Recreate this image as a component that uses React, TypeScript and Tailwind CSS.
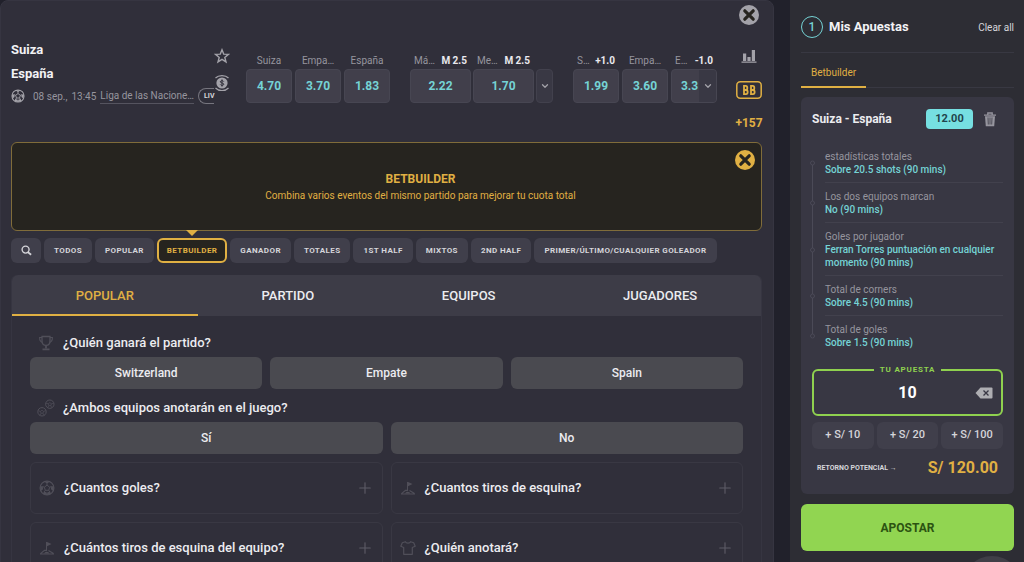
import { useState } from "react";
import type { ReactNode } from "react";
import { ChevronDown, Plus } from "lucide-react";

interface Odd {
  label: string;
  line?: string;
  value: string;
}

interface Selection {
  market: string;
  pick: string;
}

const resultOdds: Odd[] = [
  { label: "Suiza", value: "4.70" },
  { label: "Empa…", value: "3.70" },
  { label: "España", value: "1.83" },
];

const totalOdds: Odd[] = [
  { label: "Má…", line: "M 2.5", value: "2.22" },
  { label: "Me…", line: "M 2.5", value: "1.70" },
];

const handicapOdds: Odd[] = [
  { label: "S…", line: "+1.0", value: "1.99" },
  { label: "Empa…", value: "3.60" },
];

const filters = [
  "Todos",
  "Popular",
  "Betbuilder",
  "Ganador",
  "Totales",
  "1st half",
  "Mixtos",
  "2nd half",
  "Primer/Último/Cualquier goleador",
];

const tabs = ["Popular", "Partido", "Equipos", "Jugadores"];

const selections: Selection[] = [
  { market: "estadísticas totales", pick: "Sobre 20.5 shots (90 mins)" },
  { market: "Los dos equipos marcan", pick: "No (90 mins)" },
  {
    market: "Goles por jugador",
    pick: "Ferran Torres puntuación en cualquier momento (90 mins)",
  },
  { market: "Total de corners", pick: "Sobre 4.5 (90 mins)" },
  { market: "Total de goles", pick: "Sobre 1.5 (90 mins)" },
];

const BallIcon = ({ className }: { className: string }) => (
  <svg viewBox="0 0 16 16" className={className} fill="none" stroke="currentColor">
    <circle cx="8" cy="8" r="6.9" strokeWidth="1.2" />
    <path d="M8 5.2l2.7 2-1 3.1H6.3l-1-3.1z" strokeWidth="1" />
    <path d="M8 5.2V3.4M10.7 7.2l1.9-.7M9.7 10.3l1.2 1.7M6.3 10.3l-1.2 1.7M5.3 7.2l-1.9-.7" />
    <path
      d="M5.2 1.5L8 3.8l2.8-2.3zM15 6l-2.8.4-.3 2.8 2.4 1.7zM12.2 13.9l-1.2-2.4-2.7.9-.3 2.5zM3.8 13.9l1.2-2.4 2.7.9.3 2.5zM1 6l2.8.4.3 2.8-2.4 1.7z"
      fill="currentColor"
      stroke="none"
    />
  </svg>
);

const TwoBallsIcon = ({ className }: { className: string }) => (
  <svg viewBox="0 0 18 18" className={className} fill="none" stroke="currentColor">
    <circle cx="12.8" cy="5.2" r="4.2" />
    <circle cx="5" cy="12.8" r="4.2" />
    <path
      d="M12.8 3.6l1.6 1.2-.6 1.8h-2l-.6-1.8zM9 4.2l2.2.6M14.4 4.8l2.4-.8M13.8 6.6l1 2.2M11.8 6.6l-1 2.2"
      strokeWidth=".7"
    />
    <path
      d="M5 11.2l1.6 1.2-.6 1.8H4l-.6-1.8zM1.2 11.8l2.2.6M6.6 12.4l2.4-.8M6 14.2l1 2.2M4 14.2l-1 2.2"
      strokeWidth=".7"
    />
  </svg>
);

const TrophyIcon = ({ className }: { className: string }) => (
  <svg viewBox="0 0 16 16" className={className} fill="none" stroke="currentColor" strokeWidth="1.3">
    <path d="M4 1.5h8v4.7C12 9 10.5 10.3 8 10.3S4 9 4 6.2z" />
    <path d="M4 2.5H1.6c0 3 .9 4.5 3 4.9M12 2.5h2.4c0 3-.9 4.5-3 4.9" strokeWidth="1.1" />
    <path d="M8 10.3v3M4.500 14.300h7" strokeWidth="1.8" />
  </svg>
);

const CornerIcon = ({ className }: { className: string }) => (
  <svg viewBox="0 0 16 16" className={className} fill="none" stroke="currentColor">
    <path d="M7.5 11V2" />
    <path d="M7.5 1.8l5 2.3-5 2.5z" fill="currentColor" stroke="none" />
    <path d="M1.5 13.6l4-3.2h2M14.5 13.6l-5-3M1 14h14" strokeWidth="1.2" />
    <path d="M5 13.5a3 3 0 0 1 5.5 0z" fill="currentColor" stroke="none" />
  </svg>
);

const ShirtIcon = ({ className }: { className: string }) => (
  <svg
    viewBox="0 0 16 16"
    className={className}
    fill="none"
    stroke="currentColor"
    strokeWidth="1.2"
    strokeLinejoin="round"
  >
    <path d="M5.4 1.7L2.3 2.8.8 6.3l2.9 1.2v6.8h8.600V7.5l2.9-1.2-1.5-3.5-3.1-1.1c-.6 1.8-4.600 1.8-5.2 0z" />
  </svg>
);

const StarIcon = () => (
  <svg viewBox="0 0 16 16" className="h-4 w-4" fill="none" stroke="currentColor" strokeWidth="1.4">
    <path d="M8 1.8l1.7 4.3 4.7.3-3.6 3 1.2 4.5L8 11.4l-4 2.5 1.2-4.500-3.6-3 4.7-.3z" />
  </svg>
);

const CoinIcon = () => (
  <svg viewBox="0 0 16 18" className="h-[18px] w-4" fill="none" stroke="currentColor">
    <circle cx="8" cy="9" r="5.6" fill="currentColor" stroke="none" />
    <path
      d="M9.8 7.600C9.5 6.4 6.3 6.4 6.3 7.8c0 1.5 3.5.9 3.5 2.4 0 1.5-3.2 1.5-3.6.2M8 5.4v7.2"
      stroke="#302f3a"
    />
    <path
      d="M1.5 4C4.5.7 11.5.7 14.5 4M14.5 14C11.5 17.3 4.5 17.3 1.5 14"
      strokeWidth="1.2"
    />
  </svg>
);

const CloseIcon = ({ className }: { className: string }) => (
  <svg viewBox="0 0 20 20" className={className}>
    <circle cx="10" cy="10" r="10" fill="currentColor" />
    <path
      d="M5.8 5.8l8.4 8.4M14.2 5.8l-8.4 8.4"
      stroke="#26241f"
      strokeWidth="3.2"
      strokeLinecap="round"
    />
  </svg>
);

const StatsIcon = () => (
  <svg viewBox="0 0 16 14" className="h-3.5 w-4" fill="currentColor">
    <path d="M2 4.500h3.2V12H2zM6.4 8h3.2v4H6.400zM10.8 1H14v11h-3.2zM.5 12.500h15v1.2H.5z" />
  </svg>
);

const TrashIcon = () => (
  <svg viewBox="0 0 14 15" className="h-[15px] w-3.5" fill="none" stroke="currentColor">
    <path d="M1 3.2h12M4.8 3V1h4.4v2" strokeWidth="1.3" />
    <path d="M2 4.2h10l-.8 10H2.800z" fill="currentColor" stroke="none" />
    <path d="M5 5.5l.3 7M7 5.5v7M9 5.5l-.3 7" stroke="#383743" strokeWidth=".8" />
  </svg>
);

const BackspaceIcon = () => (
  <svg viewBox="0 0 18 12" className="h-3 w-[18px]">
    <path d="M5.5.5h11a1 1 0 0 1 1 1v9a1 1 0 0 1-1 1h-11L.5 6z" fill="#aeaeb2" />
    <path d="M8.5 3.5l5 5M13.5 3.5l-5 5" stroke="#383743" strokeWidth="1.3" />
  </svg>
);

const BetBuilderIcon = () => (
  <svg viewBox="0 0 26 18" className="h-[18px] w-[26px]" fill="none" stroke="currentColor">
    <rect x=".8" y=".8" width="24.4" height="16.400" rx="3.5" strokeWidth="1.5" />
    <path
      d="M8 4.800v8.400h2c2.200 0 2.200-4.200 0-4.200H8h1.800c2 0 2-4.200 0-4.200zM15 4.800v8.400h2c2.200 0 2.200-4.200 0-4.200h-2h1.800c2 0 2-4.200 0-4.200z"
      strokeWidth="1.8"
    />
  </svg>
);

const OddCell = ({ odd, wide }: { odd: Odd; wide?: boolean }) => (
  <div className={wide ? "w-[61px]" : "w-[46px]"}>
    <div
      className={`flex h-[18px] items-center px-1 text-[10px] text-[#96959e] ${
        odd.line ? "justify-between" : "justify-center"
      }`}
    >
      <span>{odd.label}</span>
      {odd.line ? <span className="font-bold text-[#e9e9ee]">{odd.line}</span> : null}
    </div>
    <button
      type="button"
      className="h-[34px] w-full rounded-[4px] border border-[#474652] bg-[#413f4b] text-xs font-bold text-[#75d3d5]"
    >
      {odd.value}
    </button>
  </div>
);

const MatchHeader = () => (
  <header className="flex h-[141px]">
    <div className="min-w-0 flex-1 pt-[37px]">
      <div className="text-[13px] leading-6 font-bold text-[#f2f2f5]">
        <h1>Suiza</h1>
        <h2>España</h2>
      </div>
      <div className="flex h-5 items-center gap-1 text-[10px] whitespace-nowrap text-[#96959e]">
        <BallIcon className="mr-1 h-3.5 w-3.5 shrink-0 text-[#a3a2a9]" />
        <span>08 sep.,</span>
        <span>13:45</span>
        <a href="#liga" className="border-b border-[#55545f]">
          Liga de las Nacione…
        </a>
        <span className="ml-auto shrink-0 rounded-l-full border border-r-0 border-[#76757e] pl-[5px] text-[7px] leading-[14px] font-bold text-[#d5d5da]">
          LIV
        </span>
      </div>
    </div>
    <div className="mr-4 flex w-4 flex-col items-center gap-2.5 pt-[47px] text-[#a3a2a9]">
      <button type="button" aria-label="Favorito">
        <StarIcon />
      </button>
      <button type="button" aria-label="Cash out">
        <CoinIcon />
      </button>
    </div>
    <div className="mr-[19px] flex gap-5 pt-[50px]">
      <div className="flex gap-[3px]">
        {resultOdds.map((odd) => (
          <OddCell key={odd.label} odd={odd} />
        ))}
      </div>
      <div className="flex items-end gap-0.5 self-start">
        {totalOdds.map((odd) => (
          <OddCell key={odd.label} odd={odd} wide />
        ))}
        <button
          type="button"
          aria-label="Más líneas"
          className="flex h-[34px] w-[17px] items-center justify-center rounded-[4px] border border-[#42414d] bg-[#393844] text-[#a3a2a9]"
        >
          <ChevronDown className="h-2.5 w-2.5" strokeWidth={3} />
        </button>
      </div>
      <div className="flex gap-[3px]">
        {handicapOdds.map((odd) => (
          <OddCell key={odd.label} odd={odd} />
        ))}
        <div className="w-[46px]">
          <div className="flex h-[18px] items-center justify-between px-1 text-[10px] text-[#96959e]">
            <span>E…</span>
            <span className="font-bold text-[#e9e9ee]">-1.0</span>
          </div>
          <div className="flex h-[34px] overflow-hidden rounded-[4px] border border-[#474652] bg-[#413f4b]">
            <button type="button" className="flex-1 pl-2 text-xs font-bold text-[#75d3d5]">
              3.3
            </button>
            <button
              type="button"
              aria-label="Más hándicaps"
              className="flex w-[17px] items-center justify-center bg-[#393844] text-[#a3a2a9]"
            >
              <ChevronDown className="h-2.5 w-2.5" strokeWidth={3} />
            </button>
          </div>
        </div>
      </div>
    </div>
    <div className="flex w-[26px] flex-col items-center pt-1 text-[#a3a2a9]">
      <button type="button" aria-label="Cerrar">
        <CloseIcon className="h-5 w-5" />
      </button>
      <button type="button" aria-label="Estadísticas" className="mt-6">
        <StatsIcon />
      </button>
      <button type="button" aria-label="Betbuilder" className="mt-[18px] text-[#e0b043]">
        <BetBuilderIcon />
      </button>
      <a href="#mercados" className="mt-4 text-xs font-bold text-[#e0b043]">
        +157
      </a>
    </div>
  </header>
);

const Question = ({ icon, children }: { icon: ReactNode; children: ReactNode }) => (
  <h3 className="flex items-center gap-2 pl-[7px] text-[13px] leading-5 font-medium text-[#ececf0]">
    <span className="flex w-[18px] justify-center text-[#504f59]">{icon}</span>
    {children}
  </h3>
);

const Options = ({ options }: { options: string[] }) => (
  <div className="flex gap-2">
    {options.map((option) => (
      <button
        key={option}
        type="button"
        className="h-8 flex-1 rounded-md bg-[#4a4a50] text-xs font-medium text-[#ececf0]"
      >
        {option}
      </button>
    ))}
  </div>
);

const MarketCard = ({ icon, title }: { icon: ReactNode; title: string }) => (
  <button
    type="button"
    className="flex h-[52px] items-center justify-between rounded-md border border-[#393843] pr-2 text-left"
  >
    <Question icon={icon}>{title}</Question>
    <Plus className="h-[18px] w-[18px] text-[#5d5c66]" strokeWidth={1.5} />
  </button>
);

const BetSlip = () => {
  const [stake, setStake] = useState("10");
  const add = (amount: number) => setStake(String(Number(stake) + amount));

  return (
    <aside className="flex w-[234px] shrink-0 flex-col bg-[#2d2d34] pr-2.5 pl-[11px]">
      <div className="flex h-[53px] items-center border-b border-[#383842] pt-0.5">
        <span className="flex h-[22px] w-[22px] items-center justify-center rounded-full border border-[#75d3d5] text-xs font-medium text-[#75d3d5]">
          1
        </span>
        <h2 className="ml-1.5 flex-1 text-[13px] font-bold text-[#f2f2f5]">Mis Apuestas</h2>
        <button type="button" className="text-[10px] text-[#d5d5da]">
          Clear all
        </button>
      </div>
      <div className="flex border-b border-[#383842] pt-[9px]">
        <button
          type="button"
          className="-mb-px h-[26px] border-b-2 border-[#e0b043] px-2.5 pb-1 text-[10px] text-[#e0b043]"
        >
          Betbuilder
        </button>
      </div>

      <section className="mt-[9px] rounded-md bg-[#383743] px-[11px] pt-3 pb-3.5">
        <div className="flex h-5 items-center pr-1.5">
          <h3 className="flex-1 text-xs font-bold text-[#ececf0]">Suiza - España</h3>
          <span className="w-[47px] rounded-[4px] bg-[#76dfe1] text-center text-[11px] leading-5 font-bold text-[#22444c]">
            12.00
          </span>
          <button type="button" aria-label="Eliminar" className="ml-2.5 text-[#96959e]">
            <TrashIcon />
          </button>
        </div>
        <ul className="mt-3.5 text-[10px] leading-[13px]">
          {selections.map((item, index) => (
            <li key={item.market} className="relative flex">
              <span
                className={`absolute left-0 w-px bg-[#4b4a57] ${
                  index === 0
                    ? "top-1/2 bottom-0"
                    : index === selections.length - 1
                      ? "top-0 h-1/2"
                      : "inset-y-0"
                }`}
              />
              <span className="absolute top-1/2 -left-0.5 h-[5px] w-[5px] -translate-y-1/2 rounded-full border border-[#4b4a57] bg-[#383743]" />
              <div
                className={`ml-[13px] flex-1 pt-[7px] pb-1.5 ${
                  index < selections.length - 1 ? "border-b border-[#42414d]" : ""
                }`}
              >
                <div className="text-[#96959e]">{item.market}</div>
                <div className="font-medium text-[#75d3d5]">{item.pick}</div>
              </div>
            </li>
          ))}
        </ul>

        <fieldset className="mt-[9px] h-[52px] w-full min-w-0 rounded-md border-2 border-[#8fd14f] px-2">
          <legend className="mx-auto px-1.5 text-center text-[8px] leading-3 font-bold tracking-widest text-[#8fd14f]">
            <label htmlFor="stake">TU APUESTA</label>
          </legend>
          <div className="flex h-full items-center pb-1">
            <input
              id="stake"
              value={stake}
              onChange={(event) => setStake(event.target.value)}
              className="min-w-0 flex-1 bg-transparent pl-[18px] text-center text-base font-bold text-white outline-none"
            />
            <button type="button" aria-label="Borrar" onClick={() => setStake("")}>
              <BackspaceIcon />
            </button>
          </div>
        </fieldset>
        <div className="mt-1.5 flex gap-[3px]">
          {[10, 20, 100].map((amount) => (
            <button
              key={amount}
              type="button"
              onClick={() => add(amount)}
              className="h-[27px] flex-1 rounded-md bg-[#403f4b] text-[11px] font-medium text-[#d5d5da]"
            >
              + S/ {amount}
            </button>
          ))}
        </div>
        <div className="mt-[7px] flex items-center justify-between px-[5px]">
          <span className="text-[7px] font-bold text-[#d5d5da]">RETORNO POTENCIAL →</span>
          <output className="text-base font-bold text-[#e0b043]">
            S/ {(Number(stake) * 12).toFixed(2)}
          </output>
        </div>
      </section>

      <button
        type="button"
        className="mt-2.5 h-[47px] shrink-0 rounded-md bg-[#91d551] text-xs font-bold text-[#2c5311]"
      >
        APOSTAR
      </button>
    </aside>
  );
};

export default function App() {
  const [filter, setFilter] = useState("Betbuilder");
  const [tab, setTab] = useState("Popular");

  return (
    <div className="relative flex h-screen overflow-hidden bg-[#21212b] font-['Roboto',sans-serif]">
      <main className="mr-4 min-w-0 flex-1 self-start rounded-t-lg border border-[#363541] bg-[#302f3a] pr-[11px] pl-2.5">
        <MatchHeader />

        <section className="relative flex h-[89px] flex-col items-center justify-center rounded-md border border-[#806c3a] bg-[#26241f] pl-[68px] text-[#e0b043]">
          <h2 className="text-xs leading-[18px] font-bold">BETBUILDER</h2>
          <p className="text-[10px] leading-4">
            Combina varios eventos del mismo partido para mejorar tu cuota total
          </p>
          <button type="button" aria-label="Cerrar aviso" className="absolute top-[7px] right-1.5">
            <CloseIcon className="h-5 w-5" />
          </button>
        </section>

        <nav className="mt-[7px] flex gap-[3px]">
          <button
            type="button"
            aria-label="Buscar"
            className="flex h-[25px] w-[30px] items-center justify-center rounded-md bg-[#403f4b] text-[#d5d5da]"
          >
            <svg
              viewBox="0 0 12 12"
              className="h-[11px] w-[11px]"
              fill="none"
              stroke="currentColor"
              strokeWidth="1.5"
            >
              <circle cx="5" cy="5" r="3.8" />
              <path d="M7.5 7.8l3.5 2.900" strokeWidth="2" />
            </svg>
          </button>
          {filters.map((name) => (
            <button
              key={name}
              type="button"
              onClick={() => setFilter(name)}
              className={`relative h-[25px] rounded-md text-[8px] font-bold tracking-wider whitespace-nowrap uppercase ${
                filter === name
                  ? "border-2 border-[#e0b043] bg-[#26241f] px-2 text-[#e0b043]"
                  : "bg-[#403f4b] px-2.5 text-[#d5d5da]"
              }`}
            >
              {name}
              {filter === name ? (
                <span className="absolute -top-[10px] left-1/2 h-0 w-0 -translate-x-1/2 border-x-[6px] border-t-[6px] border-x-transparent border-t-[#e0b043]" />
              ) : null}
            </button>
          ))}
        </nav>

        <section className="mt-3 rounded-t-md border-x border-[#363541]">
          <div className="flex rounded-t-md bg-[#3d3c47]">
            {tabs.map((name) => (
              <button
                key={name}
                type="button"
                onClick={() => setTab(name)}
                className={`h-[41px] grow border-b-2 pt-0.5 text-[13px] font-medium uppercase ${
                  tab === name ? "border-[#e0b043] text-[#e0b043]" : "border-transparent text-[#ececf0]"
                }`}
              >
                {name}
              </button>
            ))}
          </div>
          <div className="px-[18px] pt-[17px] pb-4">
            <Question icon={<TrophyIcon className="h-4 w-4" />}>¿Quién ganará el partido?</Question>
            <div className="mt-1">
              <Options options={["Switzerland", "Empate", "Spain"]} />
            </div>
            <div className="mt-[9px] mb-1">
              <Question icon={<TwoBallsIcon className="h-[18px] w-[18px]" />}>
                ¿Ambos equipos anotarán en el juego?
              </Question>
            </div>
            <Options options={["Sí", "No"]} />
            <div className="mt-2 grid grid-cols-2 gap-2">
              <MarketCard icon={<BallIcon className="h-4 w-4" />} title="¿Cuantos goles?" />
              <MarketCard icon={<CornerIcon className="h-4 w-4" />} title="¿Cuantos tiros de esquina?" />
              <MarketCard
                icon={<CornerIcon className="h-4 w-4" />}
                title="¿Cuántos tiros de esquina del equipo?"
              />
              <MarketCard icon={<ShirtIcon className="h-4 w-4" />} title="¿Quién anotará?" />
            </div>
          </div>
        </section>
      </main>

      <BetSlip />
      <button
        type="button"
        aria-label="Chat de ayuda"
        className="absolute right-0.5 -bottom-[54px] h-[60px] w-[60px] rounded-full bg-[#403f47]"
      />
    </div>
  );
}
